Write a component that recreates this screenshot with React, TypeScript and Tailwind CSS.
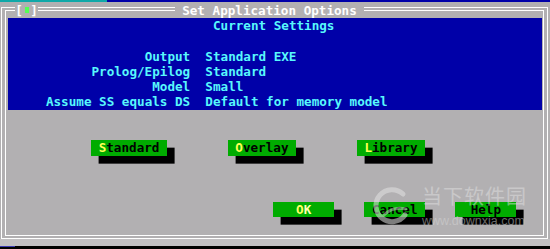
import type { ReactNode } from "react"

const GRAY = "bg-[#b2b0b2]"

function Button({ children, className = "" }: { children: ReactNode; className?: string }) {
  return (
    <span
      className={[
        "block h-[15.3px] whitespace-pre bg-[#00ac00] text-black shadow-[7.6px_7.65px_0_0_#000]",
        className,
      ].join(" ")}
    >
      {children}
    </span>
  )
}

function Hot({ children }: { children: ReactNode }) {
  return <span className="text-[#ffff55]">{children}</span>
}

const settings = [
  ["Output", "Standard EXE"],
  ["Prolog/Epilog", "Standard"],
  ["Model", "Small"],
  ["Assume SS equals DS", "Default for memory model"],
]

export default function App() {
  return (
    <div
      className={[
        "relative h-[249px] w-[550px] overflow-hidden font-['DejaVu_Sans_Mono',monospace] text-[12.62px] font-bold leading-[15.3px]",
        GRAY,
      ].join(" ")}
    >
      {/* strip left over from the row above the dialog */}
      <div className="flex h-[2px]">
        <div className="w-[107px] bg-[#10a8a8]" />
        <div className="flex-1 bg-[#0000a8]" />
      </div>

      {/* double frame */}
      <div className="ml-[1px] mr-[2px] mt-[5px] h-[232px] border border-white px-[3px] py-[2px]">
        <div className="h-full border border-white">
          <div className="ml-[2px] mr-[1px] mt-[7px] h-[91.8px] bg-[#0000a8] text-[#58f8fc]">
            <div className="h-[15.3px] whitespace-pre pl-[27ch]">Current Settings</div>
            <div className="h-[15.3px]" />
            {settings.map(([label, value]) => (
              <div key={label} className="flex h-[15.3px] gap-[2ch] whitespace-pre">
                <span className="w-[24ch] text-right">{label}</span>
                <span>{value}</span>
              </div>
            ))}
          </div>

          <div className="mt-[30.6px] flex h-[15.3px] pl-[1.6px]">
            <Button className="ml-[11ch]">
              {" "}
              <Hot>S</Hot>tandard{" "}
            </Button>
            <Button className="ml-[8ch]">
              {" "}
              <Hot>O</Hot>verlay{" "}
            </Button>
            <Button className="ml-[8ch]">
              {" "}
              <Hot>L</Hot>ibrary{" "}
            </Button>
          </div>

          <div className="mt-[45.9px] flex h-[15.3px] pl-[1.6px]">
            <Button className="ml-[35ch]">
              {"   "}
              <span className="text-[#ffff66]">O</span>
              <span className="text-[#ffffb0]">K</span>
              {"   "}
            </Button>
            <Button className="ml-[4ch]">{" Cancel "}</Button>
            <Button className="ml-[4ch]">{"  Help  "}</Button>
          </div>
        </div>
      </div>

      <div className="h-[7px] bg-[#c2c0c2]" />
      <div className="flex h-[3px] bg-black">
        <div className="h-[1px] w-[15px] bg-[#3a3ab0]" />
      </div>

      {/* title sits on the top border */}
      <div className="absolute left-0 top-[2.5px] flex h-[15.3px] text-white">
        <span className="w-[2ch]" />
        <span className={["flex w-[3ch]", GRAY].join(" ")}>
          <span className="w-[1ch]">[</span>
          <span className="flex w-[1ch] items-center justify-center">
            <span className="h-[6px] w-[4px] bg-[#55ff55]" />
          </span>
          <span className="w-[1ch]">]</span>
        </span>
        <span className="w-[18ch]" />
        <span className={["whitespace-pre", GRAY].join(" ")}> Set Application Options </span>
      </div>

      {/* site watermark */}
      <div className="pointer-events-none absolute left-[372px] top-[184px] flex items-start gap-[10px]">
        <svg width="40" height="42" viewBox="0 0 40 42" className="mt-[1px]">
          <path
            d="M31 9 A16 16 0 1 0 33 30"
            fill="none"
            stroke="rgba(225,225,225,0.55)"
            strokeWidth="5"
            strokeLinecap="round"
          />
          <path
            d="M12 30 C18 24 26 22 34 24"
            fill="none"
            stroke="rgba(225,225,225,0.45)"
            strokeWidth="3"
            strokeLinecap="round"
          />
        </svg>
        <div className="flex flex-col">
          <span className="font-['Noto_Sans_CJK_SC',sans-serif] text-[20px] font-normal leading-[24px] tracking-[1px] text-[rgba(225,225,225,0.5)]">
            当下软件园
          </span>
          <span className="mt-[7px] font-['Liberation_Sans',sans-serif] text-[12.5px] font-normal leading-[12px] text-[rgba(215,215,215,0.5)]">
            www.downxia.com
          </span>
        </div>
      </div>
    </div>
  )
}
